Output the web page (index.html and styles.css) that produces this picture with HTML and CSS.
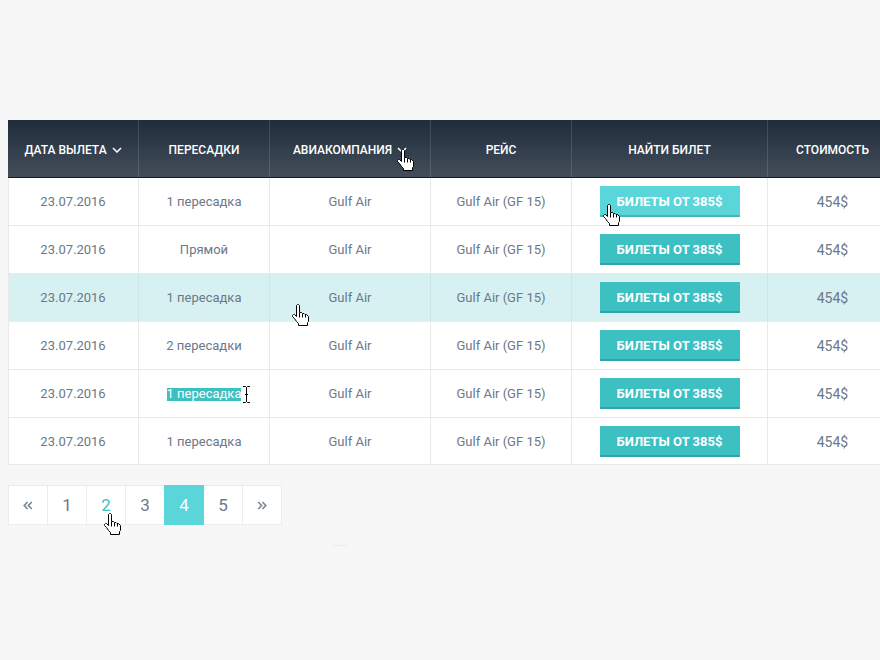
FILE: index.html
```html
<!DOCTYPE html>
<html lang="ru">
<head>
<meta charset="utf-8">
<title>Билеты</title>
<link rel="stylesheet" href="styles.css">
</head>
<body>
<svg class="defs" width="0" height="0" aria-hidden="true">
  <symbol id="hand" viewBox="0 0 17 22">
    <path class="hand-body" d="M5.5 .5H6.5L7.5 1.5V8.5H9.5L10.5 9.5H12L13 10.5H14.5L16.5 12.5V17.5L15.5 18.5V21.5H6.5V19.5L4.5 17.5L2.5 14.5L.5 12.5V11.5L1.5 10.5H2.5L4.5 12.5V1.5Z"/>
    <path class="hand-line" d="M7.5 9V13.5M10.5 10V13.5M13.5 11V13.5"/>
  </symbol>
  <symbol id="chev" viewBox="0 0 10 6">
    <path class="chev-line" d="M1 1L5 5L9 1"/>
  </symbol>
</svg>

<main class="page">
  <section class="table">
    <div class="row head">
      <div class="cell">ДАТА ВЫЛЕТА<svg class="chev"><use href="#chev"/></svg></div>
      <div class="cell">ПЕРЕСАДКИ</div>
      <div class="cell">АВИАКОМПАНИЯ<svg class="chev"><use href="#chev"/></svg></div>
      <div class="cell">РЕЙС</div>
      <div class="cell">НАЙТИ БИЛЕТ</div>
      <div class="cell">СТОИМОСТЬ</div>
    </div>
    <div class="row">
      <div class="cell">23.07.2016</div>
      <div class="cell">1 пересадка</div>
      <div class="cell">Gulf Air</div>
      <div class="cell">Gulf Air (GF 15)</div>
      <div class="cell"><a class="btn btn-hover">БИЛЕТЫ ОТ 385$</a></div>
      <div class="cell price">454$</div>
    </div>
    <div class="row">
      <div class="cell">23.07.2016</div>
      <div class="cell">Прямой</div>
      <div class="cell">Gulf Air</div>
      <div class="cell">Gulf Air (GF 15)</div>
      <div class="cell"><a class="btn">БИЛЕТЫ ОТ 385$</a></div>
      <div class="cell price">454$</div>
    </div>
    <div class="row row-active">
      <div class="cell">23.07.2016</div>
      <div class="cell">1 пересадка</div>
      <div class="cell">Gulf Air</div>
      <div class="cell">Gulf Air (GF 15)</div>
      <div class="cell"><a class="btn">БИЛЕТЫ ОТ 385$</a></div>
      <div class="cell price">454$</div>
    </div>
    <div class="row">
      <div class="cell">23.07.2016</div>
      <div class="cell">2 пересадки</div>
      <div class="cell">Gulf Air</div>
      <div class="cell">Gulf Air (GF 15)</div>
      <div class="cell"><a class="btn">БИЛЕТЫ ОТ 385$</a></div>
      <div class="cell price">454$</div>
    </div>
    <div class="row">
      <div class="cell">23.07.2016</div>
      <div class="cell"><span class="selected">1 пересадка</span></div>
      <div class="cell">Gulf Air</div>
      <div class="cell">Gulf Air (GF 15)</div>
      <div class="cell"><a class="btn">БИЛЕТЫ ОТ 385$</a></div>
      <div class="cell price">454$</div>
    </div>
    <div class="row row-last">
      <div class="cell">23.07.2016</div>
      <div class="cell">1 пересадка</div>
      <div class="cell">Gulf Air</div>
      <div class="cell">Gulf Air (GF 15)</div>
      <div class="cell"><a class="btn">БИЛЕТЫ ОТ 385$</a></div>
      <div class="cell price">454$</div>
    </div>
  </section>

  <nav class="pager">
    <a class="pg"><svg class="dbl" viewBox="0 0 12 10"><path d="M5.5 .8L1.5 5L5.5 9.2M10.5 .8L6.5 5L10.5 9.2"/></svg></a>
    <a class="pg">1</a>
    <a class="pg pg-hover">2</a>
    <a class="pg">3</a>
    <a class="pg pg-active">4</a>
    <a class="pg">5</a>
    <a class="pg"><svg class="dbl" viewBox="0 0 12 10"><path d="M1.5 .8L5.5 5L1.5 9.2M6.5 .8L10.5 5L6.5 9.2"/></svg></a>
  </nav>
  <div class="tick"></div>
</main>

<svg class="cursor cur-head"><use href="#hand"/></svg>
<svg class="cursor cur-btn"><use href="#hand"/></svg>
<svg class="cursor cur-row"><use href="#hand"/></svg>
<svg class="cursor cur-page"><use href="#hand"/></svg>
<svg class="ibeam" viewBox="0 0 7 17"><path d="M0 .5H2.5L3.5 1.5L4.5 .5H7M3.5 1.5V15.5M0 16.5H2.5L3.5 15.5L4.5 16.5H7M2 8.5H5"/></svg>
</body>
</html>
```
FILE: styles.css
```css
* { box-sizing: border-box; }
html, body { margin: 0; height: 100%; }
body {
  background: #f7f7f7;
  font-family: Roboto, "Liberation Sans", sans-serif;
  color: #6c7888;
  overflow: hidden;
  position: relative;
}
.defs { position: absolute; }
.page { padding: 120px 0 0 8px; width: 920px; }

.table { width: 890px; }
.row {
  display: grid;
  grid-template-columns: 131px 131px 161px 141px 196px 130px;
  height: 48px;
  background: #fff;
  box-shadow: inset 1px 0 #e9e9e9;
  font-size: 13px;
}
.row-last { height: 47px; }
.row-active { background: #d7f1f3; }
.cell {
  display: flex;
  justify-content: center;
  align-items: flex-start;
  padding-top: 8px;
  line-height: 31px;
  white-space: pre;
  border-right: 1px solid #e9e9e9;
  border-bottom: 1px solid #e9e9e9;
}
.cell.price { font-size: 14px; padding-top: 9px; }
.row-active .cell { border-right-color: #cfe6e8; border-bottom-color: #e4eff0; }

.head {
  height: 58px;
  background: linear-gradient(#1f2c3b, #434e5a);
  box-shadow: none;
  border-bottom: 1px solid #141c24;
  color: #fff;
  font-size: 12px;
  font-weight: 500;
}
.head .cell {
  align-items: center;
  padding: 2px 0 0;
  line-height: 16px;
  border-bottom: 0;
  border-right: 1px solid rgba(255, 255, 255, .13);
}
.chev { width: 10px; height: 6px; margin: 1px 0 0 5px; }
.chev-line { fill: none; stroke: #fff; stroke-width: 1.5; }

.btn {
  display: block;
  width: 140px;
  height: 31px;
  line-height: 31px;
  text-align: center;
  color: #fff;
  font-size: 13px;
  font-weight: 700;
  background: #3cc0c2;
  border-bottom: 2px solid #2ea6a9;
}
.btn-hover { background: #5ad5d9; border-bottom-color: #45b6b8; }

.selected {
  display: inline-block;
  margin-top: 10px;
  height: 13px;
  line-height: 12px;
  background: #3cc0c2;
  color: #fff;
}

.pager { display: flex; margin-top: 20px; }
.pg {
  width: 40px;
  height: 40px;
  margin-right: -1px;
  display: flex;
  align-items: center;
  justify-content: center;
  background: #fff;
  border: 1px solid #ececec;
  font-size: 17px;
}
.pg-hover { color: #3cc0c2; }
.pg-active {
  position: relative;
  background: #5ad5d9;
  border-color: #5ad5d9;
  color: #fff;
}
.dbl { width: 10px; height: 9px; }
.dbl path { fill: none; stroke: #7b8794; stroke-width: 2; }

.tick { width: 15px; height: 1px; margin: 20px 0 0 325px; background: #ececec; }

.cursor { position: absolute; width: 17px; height: 22px; }
.hand-body { fill: #fff; stroke: #000; stroke-width: 1; }
.hand-line { fill: none; stroke: #000; stroke-width: 1; }
.cur-head { left: 397px; top: 149px; }
.cur-btn { left: 603px; top: 204px; }
.cur-row { left: 292px; top: 304px; }
.cur-page { left: 104px; top: 513px; }
.ibeam { position: absolute; left: 243px; top: 386px; width: 7px; height: 17px; }
.ibeam path { fill: none; stroke: #000; stroke-width: 1; }
```
